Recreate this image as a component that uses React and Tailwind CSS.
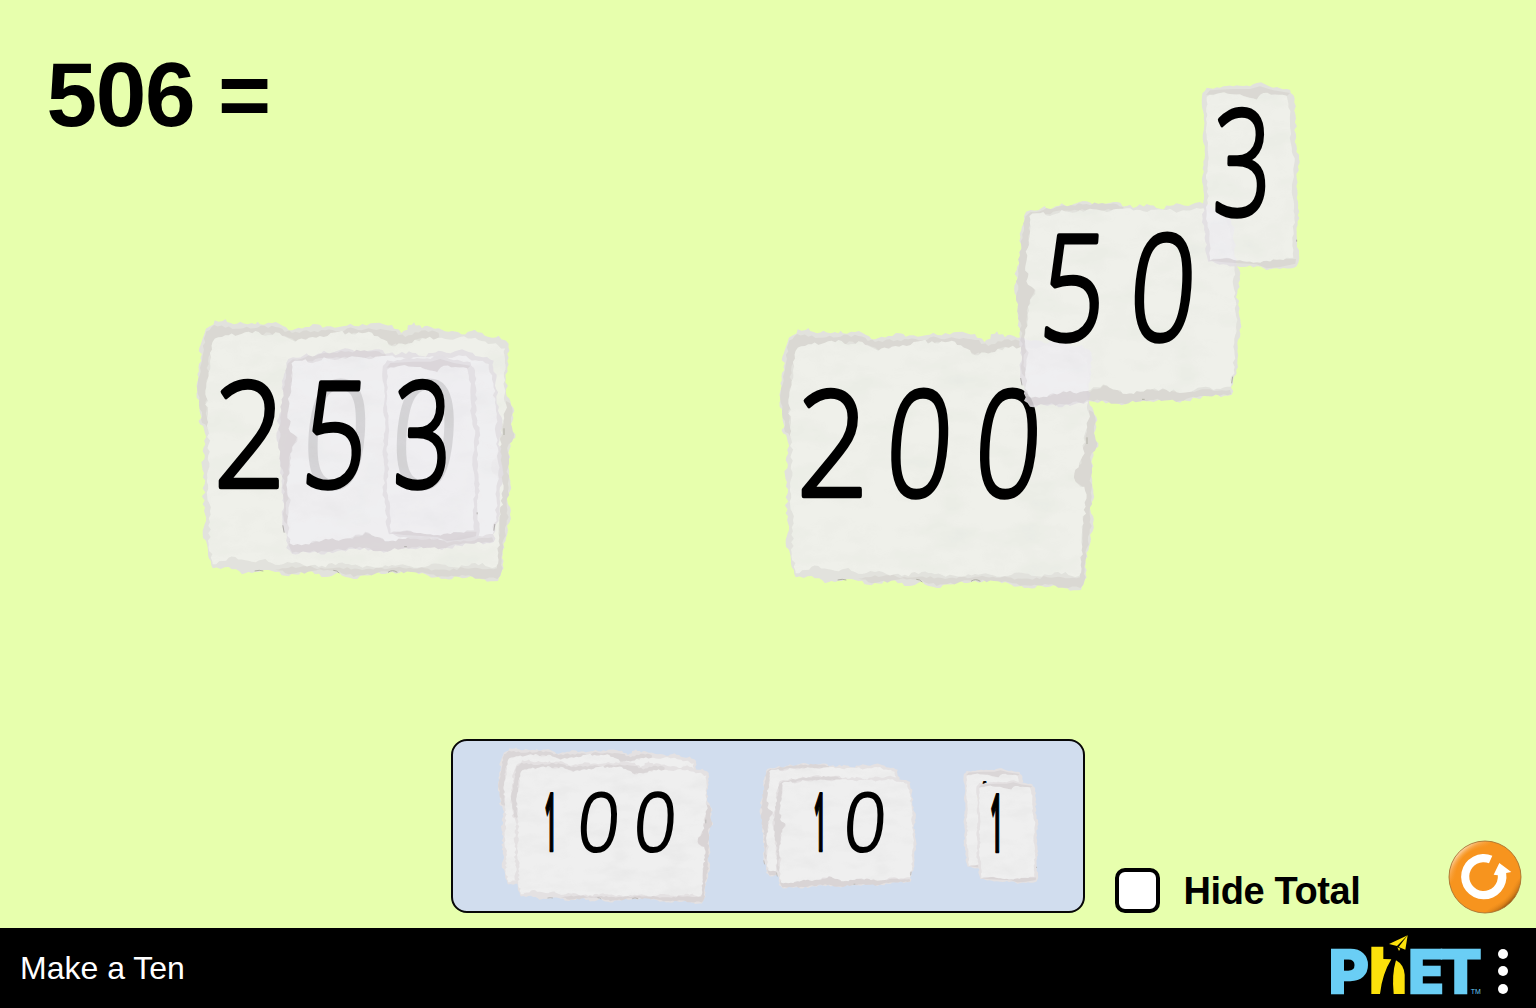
import React from "react";

/* Deterministic ragged outline for torn paper edges. */
function ragged(points, amp, seed, step = 11) {
  let s = seed;
  const rnd = () => {
    s = (s * 16807) % 2147483647;
    return s / 2147483647 - 0.5;
  };
  const out = [];
  points.forEach((p, i) => {
    const q = points[(i + 1) % points.length];
    const dx = q[0] - p[0];
    const dy = q[1] - p[1];
    const len = Math.hypot(dx, dy);
    const n = Math.max(1, Math.round(len / step));
    for (let k = 0; k < n; k++) {
      const t = k / n;
      const d = k === 0 ? 0 : rnd() * amp;
      out.push(
        `${(p[0] + dx * t - (dy / len) * d).toFixed(1)} ${(p[1] + dy * t + (dx / len) * d).toFixed(1)}`
      );
    }
  });
  return "M" + out.join("L") + "Z";
}

/* Sheets are described at three units per pixel. */
const SHEETS = {
  hundreds: {
    outer: ragged(
      [[38,66],[68,28],[92,30],[100,24],[116,36],[145,32],[190,40],[197,32],[204,40],[240,36],[262,38],[290,58],[340,48],[375,40],[392,50],[440,48],[475,38],[500,46],[548,36],[575,40],[600,42],[628,66],[666,34],[690,52],[705,44],[740,52],[780,60],[808,70],[848,56],[890,78],[920,74],[950,98],[946,150],[942,245],[964,290],[957,340],[970,380],[954,395],[950,470],[955,520],[946,570],[954,610],[942,680],[930,740],[935,772],[918,810],[885,812],[860,798],[800,798],[748,804],[700,790],[640,780],[590,786],[545,786],[485,804],[440,784],[400,798],[350,780],[290,796],[240,780],[190,782],[150,790],[110,768],[62,772],[48,720],[32,670],[42,630],[32,580],[38,520],[30,465],[40,400],[36,355],[24,340],[24,290],[14,260],[16,190],[28,150],[22,110]],
      10, 41
    ),
    light: ragged(
      [[62,92],[90,78],[150,68],[190,60],[230,72],[262,66],[310,92],[350,80],[395,78],[440,62],[480,70],[530,62],[600,106],[650,98],[690,82],[760,84],[850,80],[900,98],[940,112],[938,250],[940,300],[922,410],[898,460],[902,486],[928,500],[932,560],[920,620],[922,680],[912,768],[850,756],[800,770],[740,758],[690,768],[620,762],[560,770],[500,764],[440,756],[380,768],[300,756],[262,762],[220,744],[180,752],[130,738],[92,750],[62,760],[50,700],[54,600],[46,500],[50,400],[48,300],[40,250],[54,150]],
      11, 77
    ),
    shade: ragged([[40,72],[66,42],[100,50],[250,48],[300,66],[400,58],[530,52],[600,60],[640,78],[700,58],[740,66],[735,84],[690,80],[640,102],[590,98],[530,70],[440,70],[390,86],[310,90],[255,68],[190,70],[90,84],[62,96],[50,160],[42,230],[46,350],[30,336],[18,250],[24,170]], 10, 19),
    shade2: ragged([[942,270],[960,290],[957,340],[965,380],[950,400],[948,470],[950,530],[944,640],[928,740],[932,772],[916,804],[880,804],[820,794],[748,796],[690,784],[590,782],[485,798],[440,780],[360,780],[290,790],[250,776],[300,766],[420,772],[500,774],[600,770],[740,776],[850,770],[915,772],[920,700],[922,610],[928,510],[900,484],[898,460],[920,430]], 10, 93),
    specks: "M188 780q14-4 26 0M424 778q10 0 18 8M588 784q14-10 28 0M936 352v20",
  },
  tens: {
    outer: ragged(
      [[42,78],[62,60],[95,54],[104,48],[112,66],[155,40],[180,50],[230,34],[250,52],[275,46],[310,36],[350,48],[380,50],[410,42],[450,56],[510,42],[535,48],[570,36],[590,44],[665,70],[682,230],[690,270],[682,310],[692,400],[682,460],[682,520],[672,560],[665,614],[610,618],[560,625],[510,638],[480,624],[420,634],[370,632],[335,646],[300,636],[240,634],[180,648],[100,644],[60,650],[42,632],[44,600],[30,560],[36,500],[28,430],[26,360],[14,310],[20,240],[28,220],[34,120]],
      11, 29
    ),
    light: ragged(
      [[58,78],[100,66],[120,78],[155,60],[200,66],[250,58],[290,66],[340,56],[400,64],[470,60],[510,64],[560,54],[650,80],[664,150],[674,230],[672,320],[682,390],[670,470],[674,530],[662,590],[610,600],[575,592],[520,608],[470,600],[410,598],[350,612],[290,586],[250,592],[210,606],[160,604],[100,620],[52,618],[46,560],[52,500],[46,430],[54,350],[76,300],[54,284],[48,220],[56,150]],
      10, 63
    ),
    shade: ragged([[44,90],[62,66],[100,60],[160,46],[230,42],[300,42],[340,50],[340,60],[250,62],[160,62],[110,72],[60,80],[56,150],[50,230],[58,284],[74,300],[54,350],[46,430],[44,560],[34,540],[34,440],[20,310],[24,240]], 9, 17),
    shade2: ragged([[50,612],[110,616],[160,604],[240,606],[280,586],[350,610],[410,598],[480,602],[540,604],[600,598],[660,600],[664,612],[560,622],[510,632],[420,630],[335,640],[240,630],[180,642],[60,646]], 9, 58),
    specks: "M32 564l4 22M668 560l-3 20M396 628h8",
  },
  ones: {
    outer: ragged(
      [[36,66],[50,38],[90,38],[130,34],[180,34],[200,24],[225,28],[250,38],[300,44],[314,70],[318,130],[314,200],[327,250],[320,310],[324,380],[328,430],[320,480],[328,550],[320,574],[270,582],[230,586],[200,574],[150,576],[100,568],[55,560],[46,500],[38,430],[42,370],[36,310],[44,250],[38,180],[42,120]],
      8, 87
    ),
    light: ragged(
      [[50,66],[90,54],[150,58],[200,74],[220,54],[290,62],[300,120],[302,200],[314,260],[306,340],[314,420],[308,500],[310,548],[260,554],[200,562],[150,556],[110,548],[60,556],[58,500],[50,420],[54,340],[48,300],[56,250],[50,180],[52,120]],
      7, 35
    ),
    shade: "M48 60L60 46L130 42L180 42L210 34L250 46L300 54L290 64L220 58L205 74L150 60L90 56Z",
    shade2: "M56 556L110 550L200 562L260 552L318 552L316 566L270 576L230 580L200 568L100 562Z",
    specks: "M320 494v6",
  },
};

/* Ink extents of each digit at the drawing size, and its slant. */
const INK = {
  0: { l: 17, r: 237, slant: 0.07, weight: 300 },
  1: { l: 28, r: 190, slant: 0, weight: 700 },
  2: { l: 17, r: 231, slant: 0, weight: 300 },
  3: { l: 11, r: 233, slant: 0.02, weight: 300 },
  5: { l: 22, r: 236, slant: 0.07, weight: 300 },
};

/* boxes: [left, right] of every digit; y: baseline */
function Numeral({ value, boxes, y }) {
  return (
    <g
      fontSize="439"
      fontFamily='"Open Sans", "Noto Sans", sans-serif'
      fill="#000"
      stroke="#000"
      strokeWidth="14"
      strokeLinejoin="round"
    >
      {[...value].map((d, i) => {
        const g = INK[d];
        const [a, b] = boxes[i];
        const k = (b - a) / (g.r - g.l);
        return (
          <text
            key={i}
            fontWeight={g.weight}
            transform={`matrix(${k} 0 ${-g.slant} 1 ${a - g.l * k - g.slant * 165} ${y})`}
          >
            {d}
          </text>
        );
      })}
    </g>
  );
}

function Sheet({ kind, solid, children }) {
  const p = SHEETS[kind];
  return (
    <g>
      <g opacity={solid ? 1 : 0.89}>
        <path d={p.outer} fill={solid ? "#e4e1e2" : "#e2dfe3"} />
        <path d={p.shade} fill={solid ? "#dad6d7" : "#d9d4d8"} />
        <path d={p.shade2} fill={solid ? "#d9d4d5" : "#d9d4d8"} />
        <path d={p.light} fill={solid ? "#efefef" : "#f0eff2"} />
        <path d={p.light} filter="url(#creases)" />
        <path d={p.specks} fill="none" stroke="#a9a6a4" strokeWidth="3" />
      </g>
      {children}
    </g>
  );
}

function Defs() {
  return (
    <svg className="absolute h-0 w-0" aria-hidden="true">
      <defs>
        <filter id="creases" x="0" y="0" width="1" height="1">
          <feTurbulence type="fractalNoise" baseFrequency="0.007 0.013" numOctaves="4" seed="8" />
          <feColorMatrix values="0 0 0 0 0.4  0 0 0 0 0.4  0 0 0 0 0.4  0.2 0 0 0 -0.085" />
          <feComposite in2="SourceGraphic" operator="in" />
        </filter>
      </defs>
    </svg>
  );
}

const Two00 = () => (
  <Sheet kind="hundreds">
    <Numeral value="200" boxes={[[80, 264], [350, 523], [616, 789]]} y={529} />
  </Sheet>
);
const Fifty = () => (
  <Sheet kind="tens">
    <Numeral value="50" boxes={[[112, 275], [375, 548]]} y={450} />
  </Sheet>
);
const Three = () => (
  <Sheet kind="ones">
    <Numeral value="3" boxes={[[78, 232]]} y={419} />
  </Sheet>
);

function Stack({ kind, className, viewBox, children }) {
  return (
    <svg className={className} viewBox={viewBox} preserveAspectRatio="none">
      <g transform="translate(-60 -66)">
        <Sheet kind={kind} solid>{children}</Sheet>
      </g>
      <Sheet kind={kind} solid>{children}</Sheet>
    </svg>
  );
}

function ResetButton() {
  return (
    <button className="h-[74px] w-[74px]" aria-label="Reset">
      <svg viewBox="0 0 222 222" className="h-full w-full">
        <defs>
          <linearGradient id="rim" x1="0.12" y1="0.12" x2="0.88" y2="0.88">
            <stop offset="0" stopColor="#fde3c4" />
            <stop offset="0.13" stopColor="#f9ae58" />
            <stop offset="0.25" stopColor="#f7941e" />
            <stop offset="0.82" stopColor="#f7941e" />
            <stop offset="0.92" stopColor="#c87415" />
            <stop offset="1" stopColor="#7b480d" />
          </linearGradient>
          <radialGradient id="face">
            <stop offset="0" stopColor="#f7941e" />
            <stop offset="0.82" stopColor="#f7941e" />
            <stop offset="1" stopColor="#f7941e" stopOpacity="0" />
          </radialGradient>
        </defs>
        <circle cx="111" cy="111" r="108" fill="url(#rim)" stroke="#a36a2a" strokeWidth="2.5" />
        <circle cx="111" cy="111" r="106" fill="url(#face)" />
        <path d="M123 70A43 43 0 1 0 149.500 106L137 104L154 69L190 96L174.500 99A68 68 0 1 1 133 47Z" fill="#fff" />
      </svg>
    </button>
  );
}

function PhetLogo() {
  return (
    <svg viewBox="0 0 456 190" className="h-[63.330px] w-[152px]">
      <g fill="#6acef5" stroke="#6acef5" strokeWidth="7" fontFamily='Inter, "Open Sans", sans-serif' fontWeight="800" fontSize="177">
        <text transform="translate(-7 177) scale(1.04 1)">P</text>
        <text transform="translate(232 177) scale(0.99 1)">E</text>
        <text transform="translate(327 177) scale(1.04 1)">T</text>
      </g>
      <g fill="#fce10b">
        <path d="M121 38H157V75L181 76Q154 119 147 180H121Z" />
        <path d="M195 79Q219 92 221 122V180H188Q182 121 195 79Z" />
        <path d="M174 30L230 4L198 36Z" />
        <path d="M230 4L223 47L203 39Z" />
        <path d="M199 40L208 44L204 51Z" />
      </g>
      <text x="419" y="180" fill="#6acef5" fontFamily="Liberation Sans, sans-serif" fontSize="21">TM</text>
    </svg>
  );
}

export default function App() {
  return (
    <div className="flex h-[1008px] w-[1536px] flex-col overflow-hidden bg-[#e7ffad] font-['Liberation_Sans',Arial,sans-serif] text-black">
      <Defs />
      <main className="relative flex h-[928px] flex-col justify-between">
        <h1 className="pt-[43px] pl-[46.500px] text-[91px] leading-[104px] font-bold tracking-[-1.400px]">506 =</h1>

        <svg className="absolute top-[311px] left-[191.500px] h-[280px] w-[340px]" viewBox="0 0 1020 840">
          <Two00 />
          <g transform="translate(240.500 79)"><Fifty /></g>
          <g transform="translate(535.500 110)"><Three /></g>
        </svg>
        <svg className="absolute top-[320px] left-[775px] h-[280px] w-[340px]" viewBox="0 0 1020 840">
          <Two00 />
        </svg>
        <svg className="absolute top-[190px] left-[1010px] h-[220px] w-[240px]" viewBox="0 0 720 660">
          <Fifty />
        </svg>
        <svg className="absolute top-[75px] left-[1190px] h-[205px] w-[120px]" viewBox="0 0 360 615">
          <Three />
        </svg>

        <div className="flex h-[190px] items-start">
          <section className="mt-[1px] ml-[451px] flex h-[174px] w-[634px] shrink-0 items-start rounded-[16px] border-[2.500px] border-[#080808] bg-[#d1ddee]">
            <Stack kind="hundreds" className="mt-[2px] ml-[42px] h-[162px] w-[218px] shrink-0" viewBox="-60 -66 1030 884">
              <Numeral value="100" boxes={[[180, 216], [347, 520], [612, 787]]} y={524} />
            </Stack>
            <Stack kind="tens" className="mt-[15.500px] ml-[44px] h-[134px] w-[166px] shrink-0" viewBox="-60 -66 784 731">
              <Numeral value="10" boxes={[[214, 250], [366, 540]]} y={448} />
            </Stack>
            <Stack kind="ones" className="mt-[23px] ml-[33px] h-[125px] w-[89px] shrink-0" viewBox="-60 -66 420 681">
              <Numeral value="1" boxes={[[108, 144]]} y={415} />
            </Stack>
          </section>
          <label className="mt-[130px] ml-[30px] flex shrink-0 items-center gap-[23.500px]">
            <span className="h-[45px] w-[45px] rounded-[10px] border-[4px] border-black bg-white" />
            <span className="pt-[2px] text-[38px] leading-[43px] font-bold tracking-[-0.400px] whitespace-nowrap">Hide Total</span>
          </label>
          <div className="mt-[101.500px] mr-[14.500px] ml-auto shrink-0">
            <ResetButton />
          </div>
        </div>
      </main>

      <footer className="flex h-[80px] items-center bg-black pr-[28px] pl-[20px] text-white">
        <span className="text-[32px] leading-[40px]">Make a Ten</span>
        <div className="mt-[-5px] ml-auto">
          <PhetLogo />
        </div>
        <div className="mt-[6px] ml-[15px] flex flex-col gap-[7.500px]">
          <span className="h-[10px] w-[10px] rounded-full bg-white" />
          <span className="h-[10px] w-[10px] rounded-full bg-white" />
          <span className="h-[10px] w-[10px] rounded-full bg-white" />
        </div>
      </footer>
    </div>
  );
}
